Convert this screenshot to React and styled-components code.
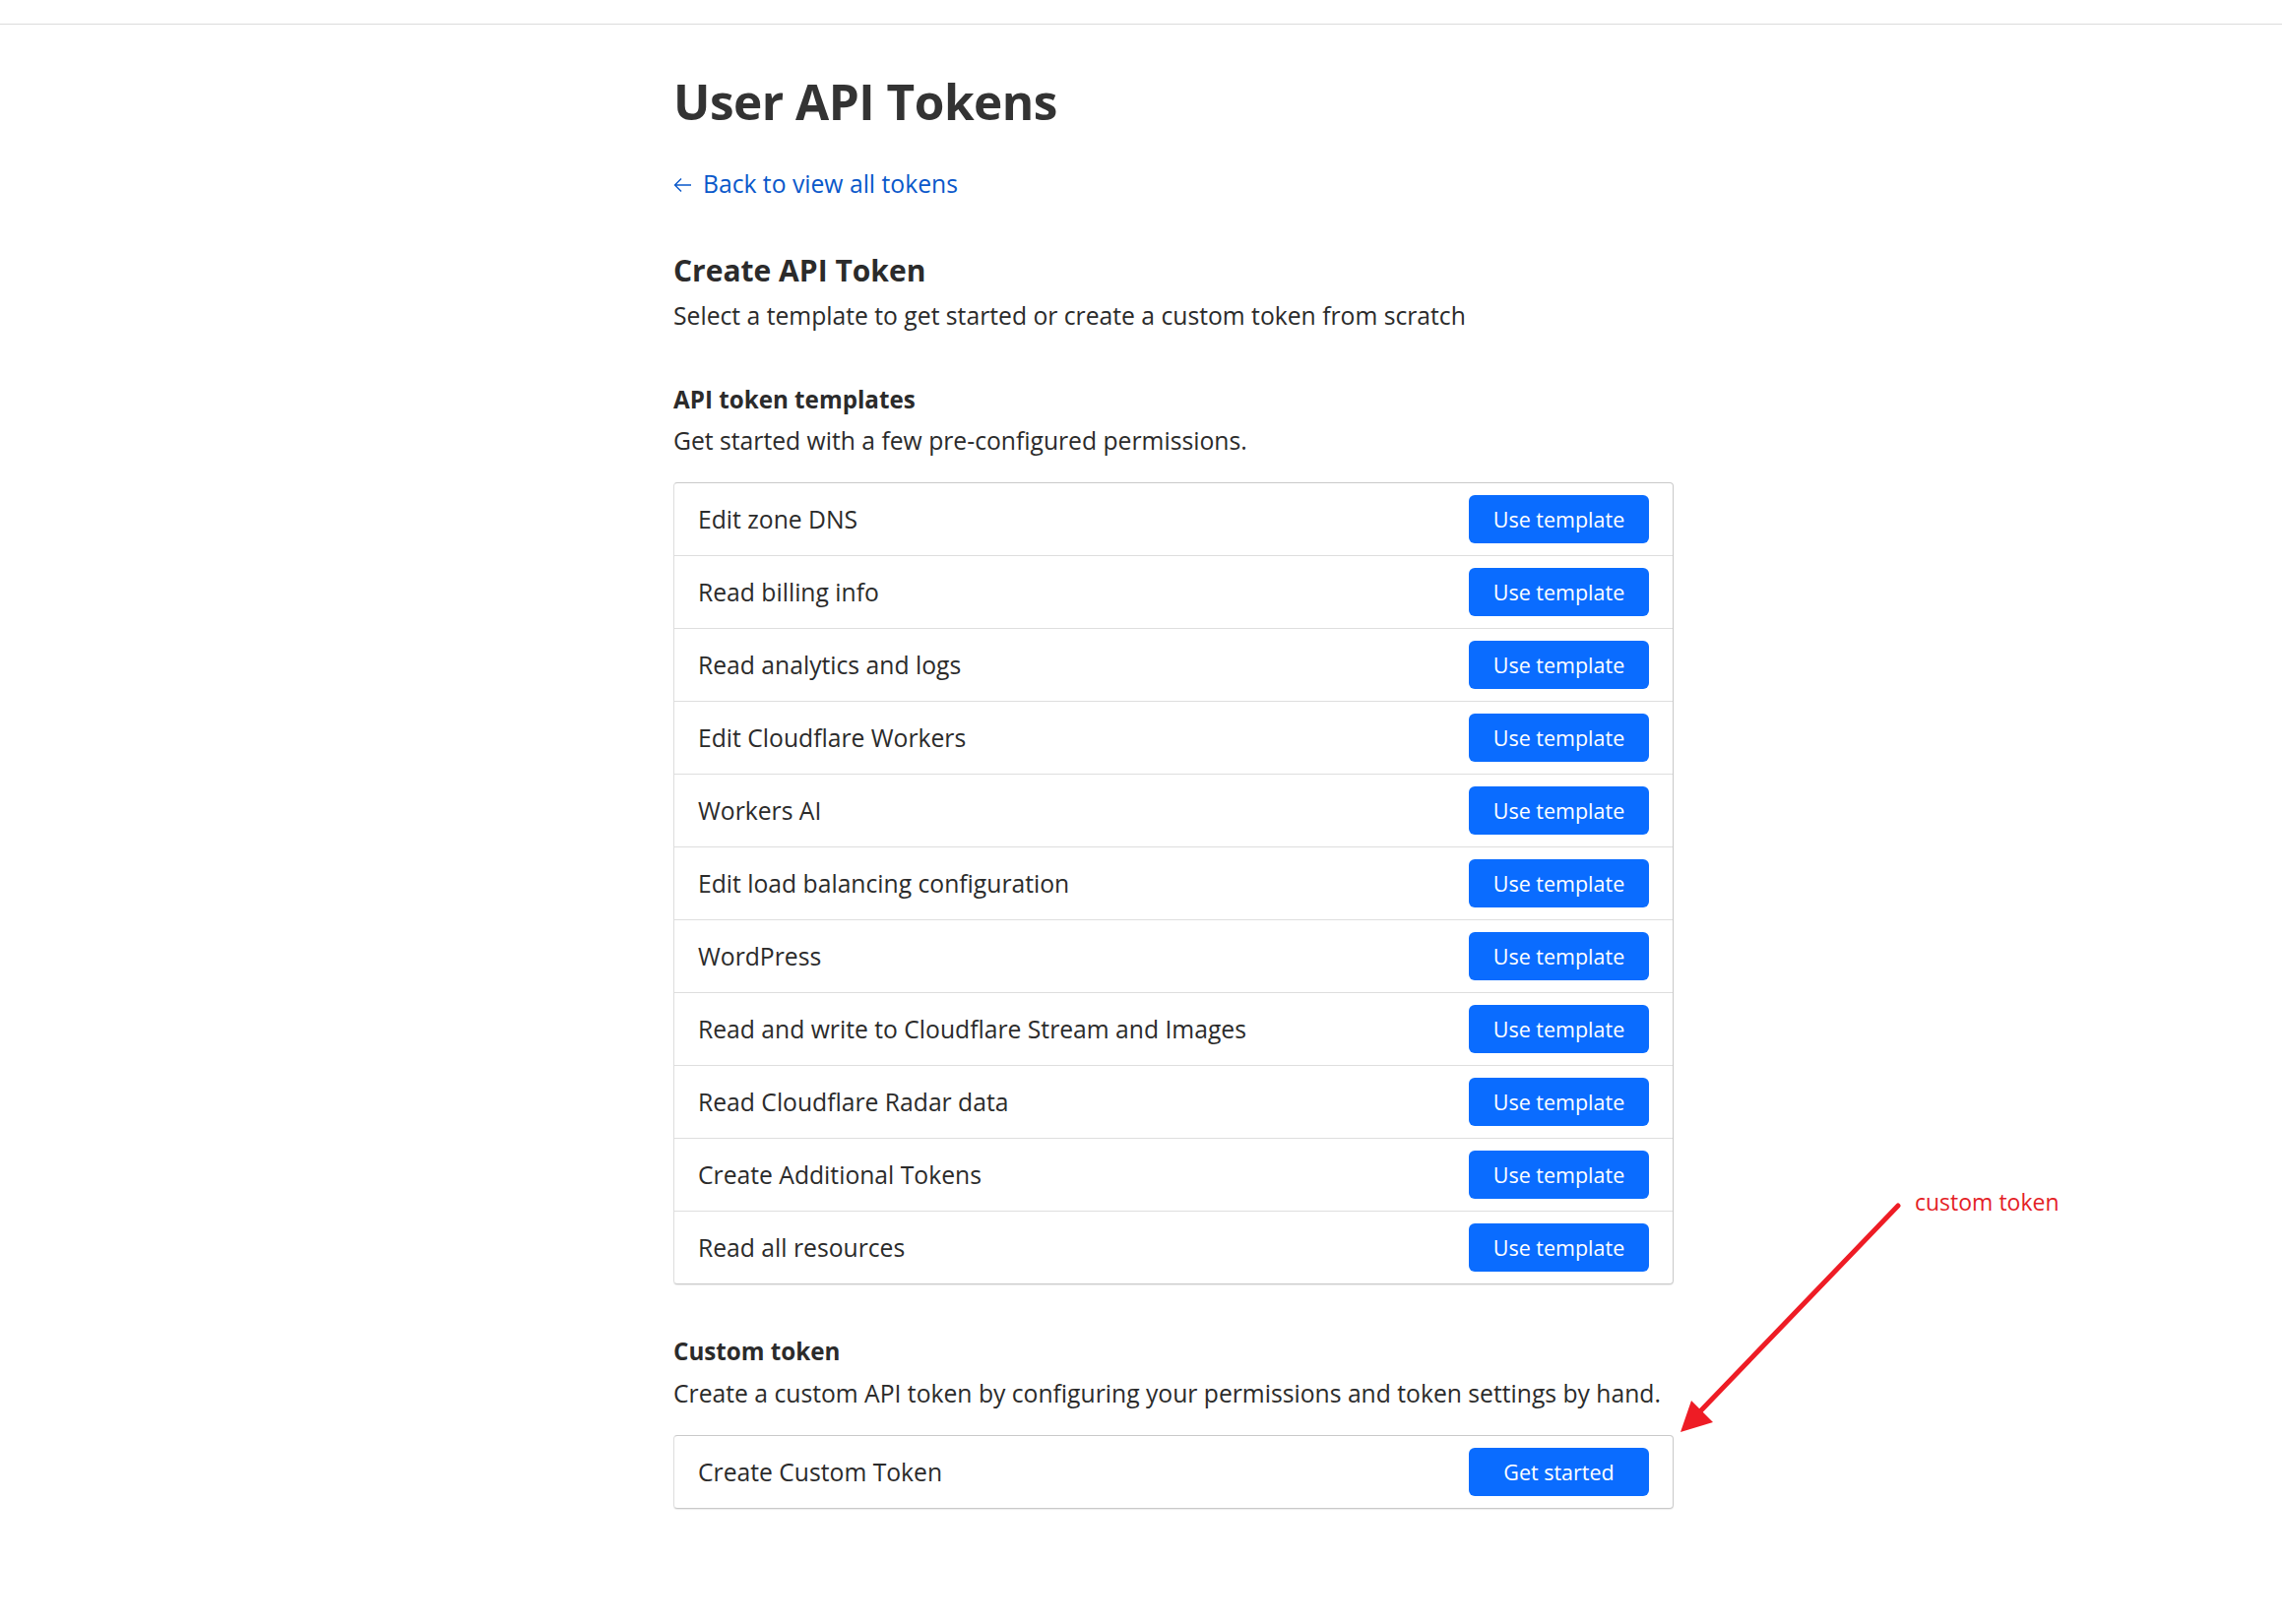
import React from "react";
import styled, { createGlobalStyle } from "styled-components";

const GlobalStyle = createGlobalStyle`
  body {
    margin: 0;
    background: #fff;
    font-family: "Open Sans", "Noto Sans", sans-serif;
    color: #2b2b2b;
  }
`;

const Page = styled.div`
  position: relative;
  min-height: 1650px;
`;

const TopBar = styled.div`
  height: 24px;
  border-bottom: 1px solid #dcdcdc;
`;

const Content = styled.main`
  width: 1016px;
  margin-left: 684px;
  display: flex;
  flex-direction: column;
`;

const Title = styled.h1`
  margin: 46px 0 0;
  font-size: 49.5px;
  line-height: 64px;
  font-weight: 700;
  color: #333;
  letter-spacing: -0.5px;
`;

const BackLink = styled.a`
  margin-top: 34px;
  display: flex;
  align-items: center;
  gap: 11px;
  font-size: 24.7px;
  line-height: 36px;
  color: #0a58ca;
  text-decoration: none;
  cursor: pointer;
`;

const Heading = styled.h2`
  margin: ${(p) => p.$top}px 0 0;
  font-size: ${(p) => p.$size}px;
  line-height: ${(p) => (p.$size > 26 ? 40 : 36)}px;
  font-weight: 700;
  color: #2b2b2b;
`;

const Text = styled.p`
  margin: ${(p) => p.$top}px 0 0;
  font-size: 24.7px;
  line-height: 36px;
  color: #2b2b2b;
`;

const List = styled.div`
  margin-top: ${(p) => p.$top}px;
  border: 1px solid #c9c9c9;
  border-left-color: #dedede;
  border-radius: 4px;
  box-shadow: 0 1px 1px rgba(0, 0, 0, 0.08);
  display: flex;
  flex-direction: column;
`;

const Row = styled.div`
  height: 73px;
  padding: 0 16px;
  display: flex;
  align-items: center;
  justify-content: space-between;
  & + & {
    border-top: 1px solid #dedede;
  }
`;

const RowLabel = styled.span`
  font-size: 24.7px;
  color: #2b2b2b;
  padding-left: 8px;
`;

const Button = styled.button`
  width: 183px;
  height: 49px;
  border: none;
  border-radius: 6px;
  background: #0a6cff;
  color: #fff;
  font-family: inherit;
  font-size: 21.5px;
  cursor: pointer;
  margin-right: 8px;
`;

const Note = styled.div`
  position: absolute;
  left: 1700px;
  top: 1195px;
  width: 420px;
  height: 270px;
`;

const NoteText = styled.span`
  position: absolute;
  left: 245px;
  top: 10px;
  font-size: 23px;
  color: #e41e26;
  white-space: nowrap;
`;

const templates = [
  "Edit zone DNS",
  "Read billing info",
  "Read analytics and logs",
  "Edit Cloudflare Workers",
  "Workers AI",
  "Edit load balancing configuration",
  "WordPress",
  "Read and write to Cloudflare Stream and Images",
  "Read Cloudflare Radar data",
  "Create Additional Tokens",
  "Read all resources",
];

const BackArrow = () => (
  <svg width="19" height="18" viewBox="0 0 19 18" fill="none">
    <path d="M18 10H1.5M8 3.5L1.5 10L8 16.5" stroke="#0a58ca" strokeWidth="1.4" />
  </svg>
);

export default function App() {
  return (
    <Page>
      <GlobalStyle />
      <TopBar />
      <Content>
        <Title>User API Tokens</Title>
        <BackLink>
          <BackArrow />
          Back to view all tokens
        </BackLink>

        <Heading $top={50} $size={30}>Create API Token</Heading>
        <Text $top={8}>Select a template to get started or create a custom token from scratch</Text>

        <Heading $top={49} $size={24.2}>API token templates</Heading>
        <Text $top={6}>Get started with a few pre-configured permissions.</Text>

        <List $top={24}>
          {templates.map((t) => (
            <Row key={t}>
              <RowLabel>{t}</RowLabel>
              <Button>Use template</Button>
            </Row>
          ))}
        </List>

        <Heading $top={50} $size={24.2}>Custom token</Heading>
        <Text $top={7}>Create a custom API token by configuring your permissions and token settings by hand.</Text>

        <List $top={24}>
          <Row>
            <RowLabel>Create Custom Token</RowLabel>
            <Button>Get started</Button>
          </Row>
        </List>
      </Content>

      <Note>
        <NoteText>custom token</NoteText>
        <svg width="420" height="270" viewBox="0 0 420 270">
          <line x1="228" y1="30" x2="26" y2="240" stroke="#ee1c25" strokeWidth="5" strokeLinecap="round" />
          <polygon points="7,260 18,228 40,250" fill="#ee1c25" />
        </svg>
      </Note>
    </Page>
  );
}
